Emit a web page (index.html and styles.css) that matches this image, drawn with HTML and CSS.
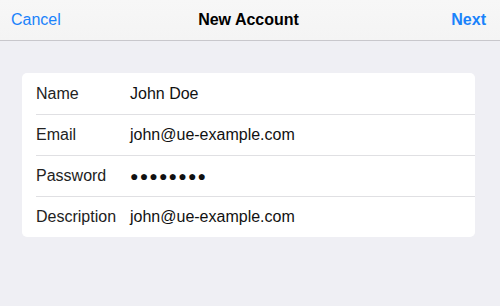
FILE: index.html
```html
<!DOCTYPE html>
<html lang="en">
<head>
    <meta charset="UTF-8">
    <meta name="viewport" content="width=device-width, initial-scale=1.0">
    <title>New Account</title>
    <link rel="stylesheet" href="styles.css">
</head>
<body>

    <div class="nav-bar">
        <a class="nav-btn" href="#">Cancel</a>
        <h1 class="nav-title">New Account</h1>
        <a class="nav-btn nav-next" href="#">Next</a>
    </div>

    <div class="content">
        <div class="form-card">
            <div class="form-row">
                <span class="row-label">Name</span>
                <span class="row-value">John Doe</span>
            </div>
            <div class="form-row">
                <span class="row-label">Email</span>
                <span class="row-value">john@ue-example.com</span>
            </div>
            <div class="form-row">
                <span class="row-label">Password</span>
                <span class="row-value password">&#9679;&#9679;&#9679;&#9679;&#9679;&#9679;&#9679;&#9679;</span>
            </div>
            <div class="form-row">
                <span class="row-label">Description</span>
                <span class="row-value">john@ue-example.com</span>
            </div>
        </div>
    </div>

</body>
</html>
```

FILE: styles.css
```css
body {
    font-family: "Liberation Sans", Arial, sans-serif;
    background-color: #efeff4;
    margin: 0;
    height: 306px;
    overflow: hidden;
}
.nav-bar {
    display: flex;
    align-items: center;
    justify-content: space-between;
    height: 41px;
    padding: 0 14px 0 11px;
    background: linear-gradient(#f7f7f7, #f4f4f4);
    border-bottom: 1px solid #c8c7cc;
    box-sizing: border-box;
}
.nav-btn {
    color: #1a82fb;
    text-decoration: none;
    font-size: 16px;
    width: 60px;
}
.nav-next {
    font-weight: bold;
    text-align: right;
}
.nav-title {
    margin: 0;
    font-size: 16px;
    font-weight: bold;
    color: #000;
}
.content {
    padding: 32px 25px 0 22px;
}
.form-card {
    background: white;
    border-radius: 5px;
}
.form-row {
    display: flex;
    align-items: center;
    height: 41px;
    box-sizing: border-box;
    margin-left: 14px;
    border-top: 1px solid #e0e0e3;
    font-size: 16px;
    color: #222;
}
.form-row:first-child {
    border-top: none;
}
.row-label {
    width: 94px;
}
.row-value {
    color: #111;
}
.password {
    font-size: 14px;
    letter-spacing: 1.2px;
}
```
